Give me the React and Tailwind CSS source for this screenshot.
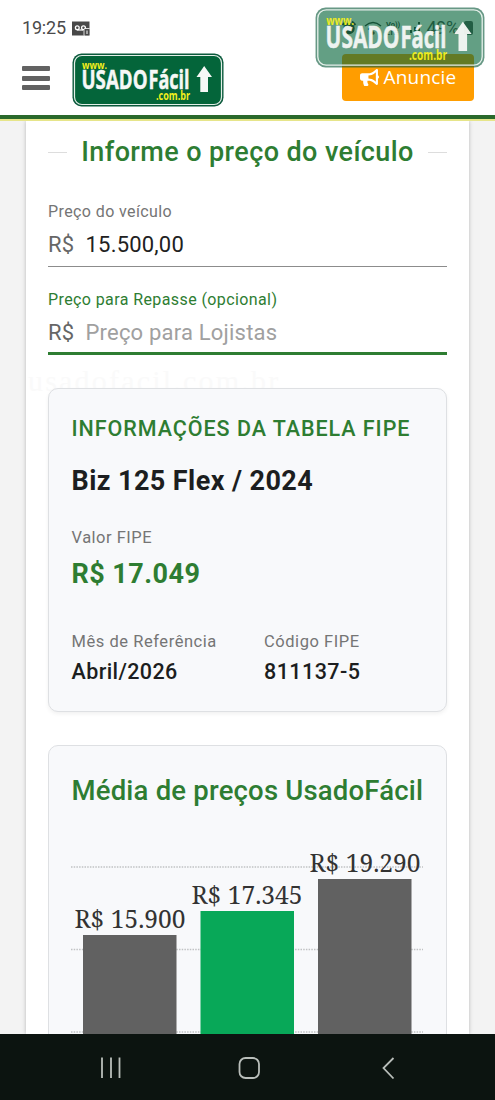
import React from "react";
import { FaBullhorn } from "react-icons/fa";

const bars = [
  { label: "R$ 15.900", x: 12, top: 85, color: "#616161", textX: 59 },
  { label: "R$ 17.345", x: 129.5, top: 61, color: "#08a858", textX: 176 },
  { label: "R$ 19.290", x: 247, top: 29, color: "#616161", textX: 294 },
];

const gridLines = [17, 99.5, 182];

function Logo({ className, faded }) {
  return (
    <svg viewBox="0 0 152 54" preserveAspectRatio="none" className={className}>
      <g opacity={faded ? 0.62 : 1}>
        <rect x="0.5" y="0.5" width="151" height="53" rx="9" fill="#0b5a3c" />
        <rect x="3" y="3" width="146" height="48" rx="7" fill="#04653a" />
      </g>
      <rect x="2.5" y="2.5" width="147" height="49" rx="7.5" fill="none" stroke="#e4f0e9" strokeWidth="1.2" />
      <g fontFamily="'Open Sans', sans-serif" fontWeight="700" opacity={faded ? 0.95 : 1}>
        <text x="10" y="15.5" fontSize="11" fill="#f4f01c" textLength="25" lengthAdjust="spacingAndGlyphs">www.</text>
        <g fill="#f6f8f6" stroke="#f6f8f6" strokeWidth="0.5">
          <text x="9.5" y="36" fontSize="27" textLength="66" lengthAdjust="spacingAndGlyphs">USADO</text>
          <text x="76.5" y="36" fontSize="27" textLength="41" lengthAdjust="spacingAndGlyphs">Fácil</text>
        </g>
        <text x="84" y="46.7" fontSize="12" fill="#f4f01c" textLength="34" lengthAdjust="spacingAndGlyphs">.com.br</text>
        <path d="M132.2 13 L140 24 H136 V39 H128.3 V24 H124.5 Z" fill="#f6f8f6" />
      </g>
    </svg>
  );
}

function StatusBar() {
  return (
    <div className="flex h-[52px] shrink-0 items-center justify-between px-[22px] pt-[4px] text-[#4a4a4a]">
      <div className="flex items-center gap-[6px]">
        <span className="text-[18px] leading-none tracking-[-0.2px]">19:25</span>
        <svg width="18" height="15" viewBox="0 0 18 15">
          <path d="M0 0.5 H17.5 V14.5 H0 Z" fill="#484848" />
          <circle cx="5.3" cy="6.8" r="1.9" fill="none" stroke="#fff" strokeWidth="1.3" />
          <circle cx="11.5" cy="6.8" r="1.9" fill="none" stroke="#fff" strokeWidth="1.3" />
          <path d="M5 9 H11" stroke="#fff" strokeWidth="1.2" />
          <rect x="12" y="7.5" width="6" height="7.5" rx="1" fill="#484848" stroke="#fff" strokeWidth="0.8" />
          <path d="M15 9.5 V13" stroke="#fff" strokeWidth="1" />
        </svg>
      </div>
      <div className="flex items-center gap-[5px]">
        <svg width="80" height="18" viewBox="0 0 80 18" fill="none" stroke="#333" strokeWidth="1.4">
          <circle cx="8" cy="9.5" r="5" fill="#333" />
          <path d="M1.5 6 L5 2.5 M11 2.5 L14.5 6" strokeWidth="2" />
          <path d="M24 7 Q32 0 40 7 M27 10.5 Q32 6 37 10.5" />
          <circle cx="32" cy="14" r="1" />
          <path d="M70 14 v-3 M74 14 v-6 M78 14 v-11" strokeWidth="2" />
          <text x="45" y="8" fontSize="7.5" fontWeight="700" fill="#333" stroke="none">Vo))</text>
          <text x="45" y="16" fontSize="7.5" fontWeight="700" fill="#333" stroke="none">LTE</text>
        </svg>
        <span className="text-[18px] leading-none tracking-[-0.3px]">49%</span>
        <span className="h-[14px] w-[9px] rounded-[2px] bg-[#555]" />
      </div>
    </div>
  );
}

function Header() {
  return (
    <header className="flex h-[63px] shrink-0 items-start justify-between pr-[21px] pl-[22px]">
      <div className="flex items-start">
        <div className="mt-[14px] flex w-7 flex-col gap-[4.5px]">
          <span className="h-[5px] rounded-[1px] bg-[#626262]" />
          <span className="h-[5px] rounded-[1px] bg-[#626262]" />
          <span className="h-[5px] rounded-[1px] bg-[#626262]" />
        </div>
        <Logo className="mt-px ml-[22px] h-[54px] w-[152px]" />
      </div>
      <button className="mt-[2px] flex h-[47px] w-[132px] items-center justify-center gap-[5px] rounded-[4px] bg-[#ff9d00] font-['Open_Sans',sans-serif] text-[19px] text-white">
        <FaBullhorn className="text-[19px]" />
        <span className="tracking-[0.2px]">Anuncie</span>
      </button>
    </header>
  );
}

function PriceField({ label, active, children }) {
  return (
    <div className={active ? "h-[56px] border-b-[3px] border-[#2e7d32]" : "h-[56px] border-b border-[#8c8c8c]"}>
      <div
        className={
          active
            ? "-mt-[6px] text-[16px] leading-[14px] tracking-[0.4px] text-[#2e7d32]"
            : "-mt-[6px] text-[16px] leading-[14px] tracking-[0.4px] text-[#757575]"
        }
      >
        {label}
      </div>
      <div className="mt-[13px] flex text-[22px] leading-[26px] tracking-[0.2px] text-[#666]">
        <span className="w-[37.5px]">R$</span>
        {children}
      </div>
    </div>
  );
}

function FipeCard() {
  return (
    <section className="relative mt-[33px] h-[324px] rounded-[10px] border-[1.5px] border-[#dee0e3] bg-[#f8f9fb] px-[22.5px] shadow-[0_2px_4px_rgba(0,0,0,0.06)]">
      <h3 className="mt-[27px] text-[21.5px] leading-[26px] font-medium tracking-[0.95px] whitespace-nowrap text-[#2e7d32]">
        INFORMAÇÕES DA TABELA FIPE
      </h3>
      <p className="mt-[23px] text-[27px] leading-[32px] font-bold tracking-[0.42px] text-[#1c1e20]">Biz 125 Flex / 2024</p>
      <p className="mt-[31px] text-[16.5px] leading-[20px] tracking-[0.5px] text-[#757575]">Valor FIPE</p>
      <p className="mt-[10px] text-[27px] leading-[32px] font-bold tracking-[0.45px] text-[#2e7d32]">R$ 17.049</p>
      <div className="mt-[42px] grid grid-cols-[192.5px_1fr]">
        <div>
          <p className="text-[16.5px] leading-[20px] tracking-[0.55px] text-[#757575]">Mês de Referência</p>
          <p className="mt-[7px] text-[21.5px] leading-[26px] font-medium tracking-[0.4px] text-[#1c1e20]">Abril/2026</p>
        </div>
        <div>
          <p className="text-[16.5px] leading-[20px] tracking-[0.55px] text-[#757575]">Código FIPE</p>
          <p className="mt-[7px] text-[21.5px] leading-[26px] font-medium tracking-[0.45px] text-[#1c1e20]">811137-5</p>
        </div>
      </div>
    </section>
  );
}

function PriceChart() {
  return (
    <svg width="352" height="185" viewBox="0 0 352 185" className="mt-[43px] -ml-px block overflow-visible">
      {gridLines.map((y) => (
        <line key={y} x1="0" x2="352" y1={y} y2={y} stroke="#c0c2c4" strokeWidth="1.3" strokeDasharray="1.5 1.2" />
      ))}
      {bars.map((bar) => (
        <g key={bar.label}>
          <rect x={bar.x} y={bar.top} width="93.5" height={200 - bar.top} fill={bar.color} />
          <text
            x={bar.textX}
            y={bar.top - 7}
            textAnchor="middle"
            fontFamily="'Noto Serif', 'Liberation Serif', serif"
            fontSize="26"
            fill="#333"
            textLength="111"
            lengthAdjust="spacingAndGlyphs"
          >
            {bar.label}
          </text>
        </g>
      ))}
    </svg>
  );
}

function NavBar() {
  return (
    <nav className="z-10 flex h-[66px] shrink-0 items-center bg-[#0c1410]">
      <svg width="495" height="66" viewBox="0 0 495 66" fill="none" stroke="#b9beba" strokeWidth="1.8">
        <path d="M102 23.5 V44 M111 23.5 V44 M119.5 23.5 V44" />
        <rect x="239.5" y="24" width="19.5" height="20" rx="6" />
        <path d="M393.5 24 L383.5 34 L393.5 44.5" />
      </svg>
    </nav>
  );
}

export default function App() {
  return (
    <div className="relative flex h-[1100px] w-[495px] flex-col overflow-hidden bg-white font-[Roboto,sans-serif]">
      <StatusBar />
      <Header />
      <div className="h-[6px] shrink-0 border-b-2 border-[#e6e58a] bg-[#2a692b]" />
      <main className="min-h-0 flex-1 overflow-hidden bg-[#f3f3f3] px-[26px]">
        <div className="relative h-full bg-white px-[22px] shadow-[0_0_4px_rgba(0,0,0,0.25)]">
          <div className="flex items-center justify-between pt-[14px]">
            <span className="h-px w-[19px] bg-[#ddd]" />
            <h2 className="text-[27px] leading-[34px] font-medium tracking-[0.4px] whitespace-nowrap text-[#2e7d32]">
              Informe o preço do veículo
            </h2>
            <span className="h-px w-[19px] bg-[#ddd]" />
          </div>
          <div className="mt-[42px] flex flex-col gap-[32px]">
            <PriceField label="Preço do veículo">
              <span className="text-[#212121]">15.500,00</span>
            </PriceField>
            <PriceField label="Preço para Repasse (opcional)" active>
              <span className="text-[#a0a0a0]">Preço para Lojistas</span>
            </PriceField>
          </div>
          <div className="absolute top-[244px] left-[2px] font-['Liberation_Serif',serif] text-[30px] leading-[32px] tracking-[2.2px] text-[#fafafa]">
            usadofacil.com.br
          </div>
          <FipeCard />
          <section className="relative mt-[33px] h-[400px] rounded-[10px] border-[1.5px] border-[#dee0e3] bg-[#f8f9fb] px-[22.5px]">
            <h3 className="mt-[29px] text-[27.5px] leading-[32px] font-medium tracking-[0.2px] whitespace-nowrap text-[#2e7d32]">
              Média de preços UsadoFácil
            </h3>
            <PriceChart />
          </section>
        </div>
      </main>
      <NavBar />
      <div className="absolute top-[7px] left-[315px]">
        <Logo faded className="h-[61px] w-[170px]" />
      </div>
    </div>
  );
}
